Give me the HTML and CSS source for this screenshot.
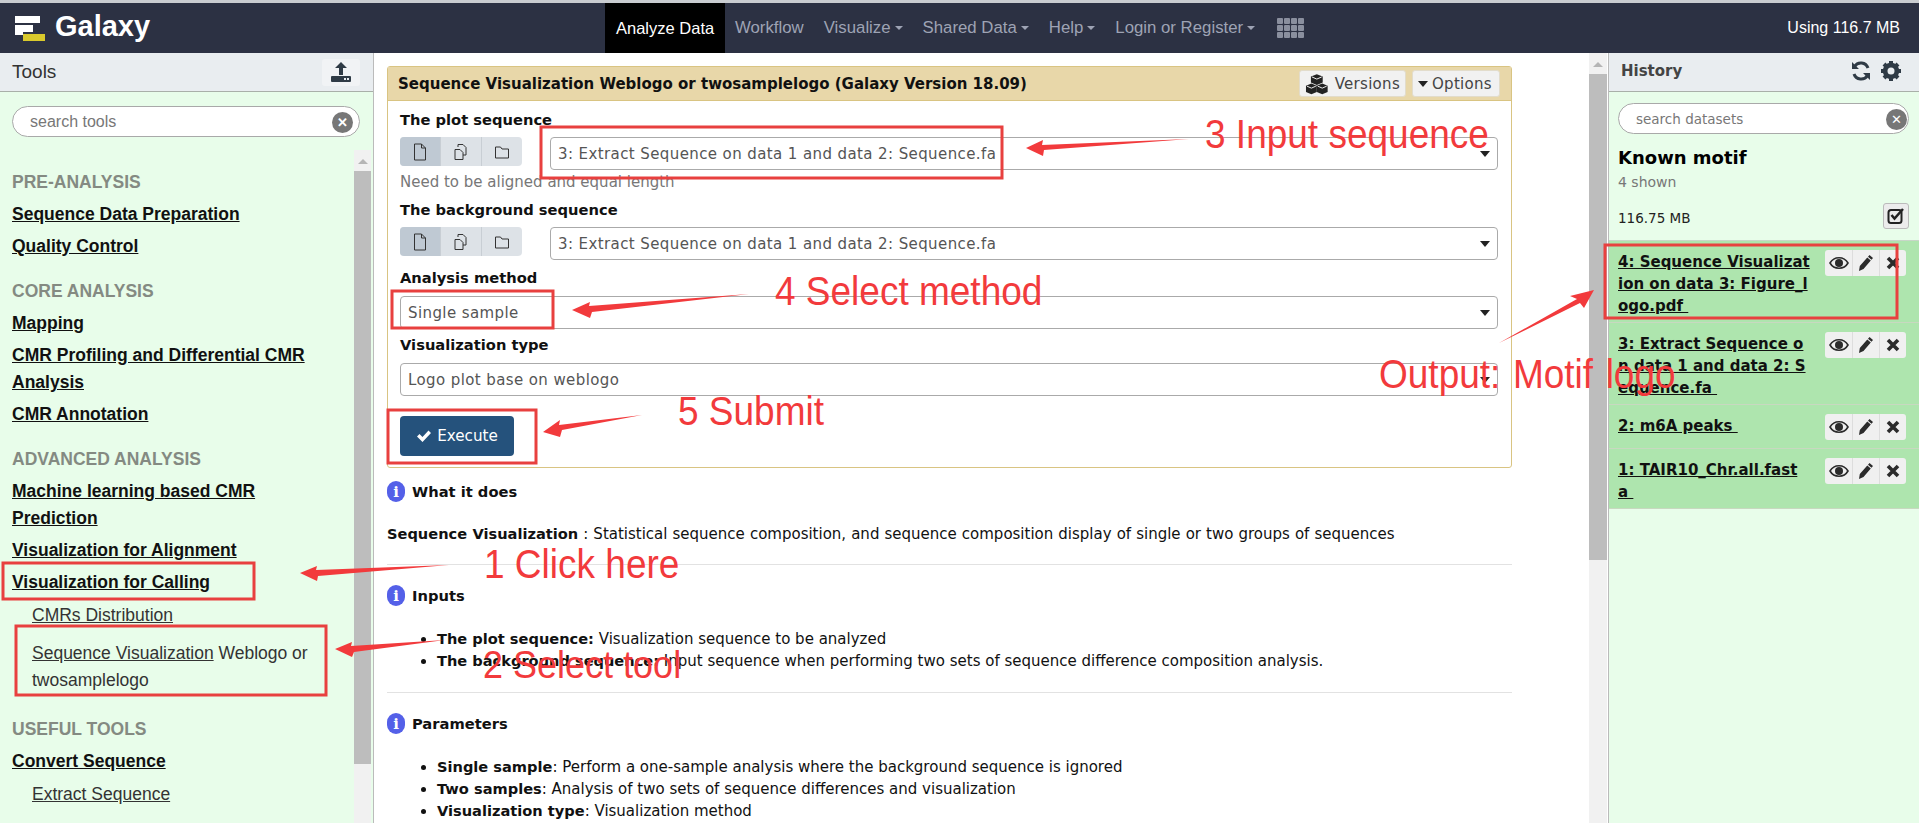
FILE: index.html
```html
<!DOCTYPE html>
<html lang="en">
<head>
<meta charset="utf-8">
<title>Galaxy</title>
<link rel="stylesheet" href="styles.css">
</head>
<body>
<div class="top-strip"></div>
<header class="navbar">
  <div class="brand">
    <svg class="logo" width="32" height="28" viewBox="0 0 32 28"><rect x="1" y="1" width="25" height="7" fill="#fff"/><rect x="1" y="10" width="18" height="7" fill="#fff"/><rect x="1" y="17" width="8" height="3" fill="#fff"/><rect x="9" y="19" width="22" height="7" fill="#d9c92c"/></svg>
    <span class="brand-name">Galaxy</span>
  </div>
  <nav class="nav">
    <a class="nav-item active">Analyze Data</a>
    <a class="nav-item">Workflow</a>
    <a class="nav-item caret">Visualize</a>
    <a class="nav-item caret">Shared Data</a>
    <a class="nav-item caret">Help</a>
    <a class="nav-item caret">Login or Register</a>
    <span class="grid-icon"><i></i><i></i><i></i><i></i><i></i><i></i><i></i><i></i><i></i><i></i><i></i><i></i></span>
  </nav>
  <div class="quota">Using 116.7 MB</div>
</header>
<div class="workspace">
  <aside class="left">
    <div class="panel-head">
      <span class="panel-title">Tools</span>
      <span class="upload"><svg width="22" height="22" viewBox="0 0 22 22"><path d="M11 1l6 6h-4v7H9V7H5z" fill="#2f3b46"/><rect x="1" y="15" width="20" height="6" rx="1" fill="#2f3b46"/><rect x="14" y="17" width="2" height="2" fill="#e9edf0"/><rect x="17" y="17" width="2" height="2" fill="#e9edf0"/></svg></span>
    </div>
    <div class="tool-search"><div class="search-box tools-box"><span>search tools</span><b class="clear">✕</b></div></div>
    <div class="tool-body">
      <div class="tool-list">
        <div class="label">PRE-ANALYSIS</div>
        <a class="tool">Sequence Data Preparation</a>
        <a class="tool">Quality Control</a>
        <div class="label">CORE ANALYSIS</div>
        <a class="tool">Mapping</a>
        <a class="tool">CMR Profiling and Differential CMR Analysis</a>
        <a class="tool">CMR Annotation</a>
        <div class="label">ADVANCED ANALYSIS</div>
        <a class="tool">Machine learning based CMR Prediction</a>
        <a class="tool">Visualization for Alignment</a>
        <a class="tool">Visualization for Calling</a>
        <div class="sub"><u>CMRs Distribution</u></div>
        <div class="sub sub-wide"><u>Sequence Visualization</u> Weblogo or twosamplelogo</div>
        <div class="label">USEFUL TOOLS</div>
        <a class="tool">Convert Sequence</a>
        <div class="sub"><u>Extract Sequence</u></div>
      </div>
      <div class="scroll scroll-left"><span class="arrow"></span><span class="thumb thumb-left"></span></div>
    </div>
  </aside>
  <main class="center">
    <div class="center-content">
      <section class="card">
        <div class="card-head">
          <span class="card-title">Sequence Visualization Weblogo or twosamplelogo (Galaxy Version 18.09)</span>
          <span class="btn btn-versions"><svg width="24" height="22" viewBox="0 0 24 22"><path d="M12 1l6 2.500v6L12 12 6 9.500v-6z" fill="#222"/><path d="M6.500 10.500l5.500 2.200v6.300L6.500 21.500 1 19v-6.300z" fill="#222"/><path d="M17.500 10.500l5.500 2.200V19l-5.500 2.500L12 19v-6.300z" fill="#222"/><path d="M7 3.800l5 2.200 5-2.200M2 13.200l4.500 2 4.500-2M13 13.200l4.500 2 4.500-2" stroke="#eee" fill="none"/></svg>Versions</span>
          <span class="btn btn-options"><i class="tri"></i>Options</span>
        </div>
        <div class="card-body">
          <div class="field-label">The plot sequence</div>
          <div class="picker">
            <div class="btn-group">
              <span class="seg on"><svg width="14" height="18" viewBox="0 0 14 18"><path d="M1.500 1h7l4 4v12h-11zM8.500 1v4h4" fill="none" stroke="#333"/></svg></span>
              <span class="seg"><svg width="16" height="18" viewBox="0 0 16 18"><path d="M5 4V1.500h5l3 3V12h-3M2 6.500h5l3 3V16.500H2z" fill="none" stroke="#333"/></svg></span>
              <span class="seg"><svg width="16" height="16" viewBox="0 0 16 16"><path d="M1.500 3h5l1.500 2h6.500v9h-13z" fill="none" stroke="#333"/></svg></span>
            </div>
            <div class="select"><span>3: Extract Sequence on data 1 and data 2: Sequence.fa</span><i class="tri"></i></div>
          </div>
          <div class="help">Need to be aligned and equal length</div>
          <div class="field-label gap-b">The background sequence</div>
          <div class="picker">
            <div class="btn-group">
              <span class="seg on"><svg width="14" height="18" viewBox="0 0 14 18"><path d="M1.500 1h7l4 4v12h-11zM8.500 1v4h4" fill="none" stroke="#333"/></svg></span>
              <span class="seg"><svg width="16" height="18" viewBox="0 0 16 18"><path d="M5 4V1.500h5l3 3V12h-3M2 6.500h5l3 3V16.500H2z" fill="none" stroke="#333"/></svg></span>
              <span class="seg"><svg width="16" height="16" viewBox="0 0 16 16"><path d="M1.500 3h5l1.500 2h6.500v9h-13z" fill="none" stroke="#333"/></svg></span>
            </div>
            <div class="select"><span>3: Extract Sequence on data 1 and data 2: Sequence.fa</span><i class="tri"></i></div>
          </div>
          <div class="field-label gap-c">Analysis method</div>
          <div class="select"><span>Single sample</span><i class="tri"></i></div>
          <div class="field-label gap-d">Visualization type</div>
          <div class="select"><span>Logo plot base on weblogo</span><i class="tri"></i></div>
          <span class="execute"><svg width="16" height="14" viewBox="0 0 16 14"><path d="M1 7.500l2.500-2.500 3 3L12.500 1.500 15 4l-8.500 9z" fill="#fff"/></svg>Execute</span>
        </div>
      </section>
      <div class="doc">
        <h4 class="doc-h first"><i class="info">i</i>What it does</h4>
        <p class="doc-p"><b>Sequence Visualization</b> : Statistical sequence composition, and sequence composition display of single or two groups of sequences</p>
        <hr class="doc-hr">
        <h4 class="doc-h"><i class="info">i</i>Inputs</h4>
        <ul class="doc-list">
          <li><b>The plot sequence:</b> Visualization sequence to be analyzed</li>
          <li><b>The background sequence:</b> Input sequence when performing two sets of sequence difference composition analysis.</li>
        </ul>
        <hr class="doc-hr">
        <h4 class="doc-h"><i class="info">i</i>Parameters</h4>
        <ul class="doc-list">
          <li><b>Single sample</b>: Perform a one-sample analysis where the background sequence is ignored</li>
          <li><b>Two samples</b>: Analysis of two sets of sequence differences and visualization</li>
          <li><b>Visualization type</b>: Visualization method</li>
        </ul>
      </div>
    </div>
    <div class="scroll scroll-center"><span class="arrow"></span><span class="thumb thumb-center"></span></div>
  </main>
  <aside class="right">
    <div class="panel-head hist-head">
      <span class="hist-title">History</span>
      <span class="hist-icons">
        <svg width="22" height="22" viewBox="0 0 22 22"><path d="M18 8a7.500 7.500 0 0 0-13.500-1.500M4 14a7.500 7.500 0 0 0 13.500 1.500" fill="none" stroke="#2f3b46" stroke-width="3"/><path d="M2 2v7h7zM20 20v-7h-7z" fill="#2f3b46"/></svg>
        <svg width="22" height="22" viewBox="0 0 22 22"><circle cx="11" cy="11" r="6" fill="none" stroke="#2f3b46" stroke-width="4.500"/><path d="M11 1v20M1 11h20M4 4l14 14M18 4L4 18" stroke="#2f3b46" stroke-width="4"/><circle cx="11" cy="11" r="3.500" fill="#e9edf0"/></svg>
      </span>
    </div>
    <div class="hist-top">
      <div class="search-box hist-search"><span>search datasets</span><b class="clear">✕</b></div>
      <div class="hist-name">Known motif</div>
      <div class="hist-shown">4 shown</div>
      <div class="hist-size"><span>116.75 MB</span><span class="check"><svg width="18" height="18" viewBox="0 0 18 18"><rect x="1.500" y="3" width="13" height="13" rx="2.500" fill="none" stroke="#222" stroke-width="2"/><path d="M4.500 8l3 3.500L16 2" fill="none" stroke="#222" stroke-width="2.500"/></svg></span></div>
    </div>
    <div class="dataset"><a>4: Sequence Visualizat<br>ion on data 3: Figure_l<br>ogo.pdf </a><span class="acts"><span class="act"><svg width="20" height="14" viewBox="0 0 20 14"><path d="M1 7c4-7 14-7 18 0-4 7-14 7-18 0z" fill="none" stroke="#2b2b2b" stroke-width="1.600"/><circle cx="10" cy="7" r="4" fill="#2b2b2b"/></svg></span><span class="act"><svg width="16" height="18" viewBox="0 0 16 18"><path d="M11.500 1l3.500 3-1.500 1.800-3.500-3zM9.300 3.600l3.500 3L5.500 15 1 17l.8-5z" fill="#2b2b2b"/></svg></span><span class="act"><svg width="14" height="14" viewBox="0 0 14 14"><path d="M2 2l10 10M12 2L2 12" stroke="#2b2b2b" stroke-width="3.600"/></svg></span></span></div>
    <div class="dataset"><a>3: Extract Sequence o<br>n data 1 and data 2: S<br>equence.fa </a><span class="acts"><span class="act"><svg width="20" height="14" viewBox="0 0 20 14"><path d="M1 7c4-7 14-7 18 0-4 7-14 7-18 0z" fill="none" stroke="#2b2b2b" stroke-width="1.600"/><circle cx="10" cy="7" r="4" fill="#2b2b2b"/></svg></span><span class="act"><svg width="16" height="18" viewBox="0 0 16 18"><path d="M11.500 1l3.500 3-1.500 1.800-3.500-3zM9.300 3.600l3.500 3L5.500 15 1 17l.8-5z" fill="#2b2b2b"/></svg></span><span class="act"><svg width="14" height="14" viewBox="0 0 14 14"><path d="M2 2l10 10M12 2L2 12" stroke="#2b2b2b" stroke-width="3.600"/></svg></span></span></div>
    <div class="dataset"><a>2: m6A peaks </a><span class="acts"><span class="act"><svg width="20" height="14" viewBox="0 0 20 14"><path d="M1 7c4-7 14-7 18 0-4 7-14 7-18 0z" fill="none" stroke="#2b2b2b" stroke-width="1.600"/><circle cx="10" cy="7" r="4" fill="#2b2b2b"/></svg></span><span class="act"><svg width="16" height="18" viewBox="0 0 16 18"><path d="M11.500 1l3.500 3-1.500 1.800-3.500-3zM9.300 3.600l3.500 3L5.500 15 1 17l.8-5z" fill="#2b2b2b"/></svg></span><span class="act"><svg width="14" height="14" viewBox="0 0 14 14"><path d="M2 2l10 10M12 2L2 12" stroke="#2b2b2b" stroke-width="3.600"/></svg></span></span></div>
    <div class="dataset"><a>1: TAIR10_Chr.all.fast<br>a </a><span class="acts"><span class="act"><svg width="20" height="14" viewBox="0 0 20 14"><path d="M1 7c4-7 14-7 18 0-4 7-14 7-18 0z" fill="none" stroke="#2b2b2b" stroke-width="1.600"/><circle cx="10" cy="7" r="4" fill="#2b2b2b"/></svg></span><span class="act"><svg width="16" height="18" viewBox="0 0 16 18"><path d="M11.500 1l3.500 3-1.500 1.800-3.500-3zM9.300 3.600l3.500 3L5.500 15 1 17l.8-5z" fill="#2b2b2b"/></svg></span><span class="act"><svg width="14" height="14" viewBox="0 0 14 14"><path d="M2 2l10 10M12 2L2 12" stroke="#2b2b2b" stroke-width="3.600"/></svg></span></span></div>
  </aside>
</div>

<svg class="marks" width="1919" height="823" viewBox="0 0 1919 823">
  <g fill="none" stroke="#e8403f" stroke-width="3">
    <rect x="541" y="127" width="461" height="51"/>
    <rect x="392" y="291" width="161" height="37"/>
    <rect x="388" y="410" width="148" height="53"/>
    <rect x="1605" y="245" width="292" height="73"/>
    <rect x="3" y="563" width="251" height="36"/>
    <rect x="16" y="626" width="310" height="69"/>
  </g>
  <g fill="#f23a3c">
    <polygon points="1026,148 1043,140 1042,145 1189,139 1044,150 1043,156"/>
    <polygon points="572,310 590,302 589,306 749,294 592,312 590,318"/>
    <polygon points="543,432 560,420 559,425 642,415 562,430 560,437"/>
    <polygon points="300,573 317,566 316,570 449,565 318,576 317,581"/>
    <polygon points="335,649 352,642 351,646 445,640 354,652 352,657"/>
    <polygon points="1594,290 1584,308 1580,303 1499,343 1577,299 1570,296"/>
  </g>
</svg>
<span class="note note-3">3 Input sequence</span>
<span class="note note-4">4 Select method</span>
<span class="note note-5">5 Submit</span>
<span class="note note-1">1 Click here</span>
<span class="note note-2">2 Select tool</span>
<span class="note note-o">Output:&nbsp; Motif&nbsp; logo</span>
</body>
</html>
```
FILE: styles.css
```css
* { box-sizing: border-box; }
html, body { margin: 0; height: 823px; overflow: hidden; }
body { position: relative; font-family: "DejaVu Sans", sans-serif; font-size: 14px; color: #111; background: #fff; }
.top-strip { height: 3px; background: #c9ccd0; }
.navbar { height: 50px; background: #2c3143; display: flex; align-items: stretch; color: #fff; }
.brand { width: 605px; display: flex; align-items: center; padding-left: 14px; }
.logo { display: block; margin-top: 1px; }
.brand-name { font: bold 29px "Liberation Sans", sans-serif; margin-left: 9px; margin-top: -4px; }
.nav { display: flex; align-items: stretch; flex: 1; font: 15px "Liberation Sans", sans-serif; }
.nav-item { display: flex; align-items: center; padding: 0 10px; color: #9ea3b4; font-size: 16.800px; white-space: nowrap; }
.nav-item.active { background: #000; color: #fff; padding: 0 11px; width: 120px; font-size: 16.500px; }
.caret::after { content: ""; margin-left: 4px; border-top: 4px solid #9ea3b4; border-left: 4px solid transparent; border-right: 4px solid transparent; }
.grid-icon { display: grid; grid-template-columns: repeat(4, 6px); grid-template-rows: repeat(3, 6px); gap: 1px; align-self: center; margin-left: 12px; }
.grid-icon i { background: #8a8f9e; border-radius: 1px; }
.quota { font: 16px "Liberation Sans", sans-serif; align-self: center; padding-right: 19px; }
.workspace { display: flex; height: 770px; }
.left { width: 374px; flex: none; background: #e8fdea; border-right: 1px solid #bbb; display: flex; flex-direction: column; font-family: "Liberation Sans", sans-serif; }
.panel-head { height: 39px; flex: none; background: #e9edf0; border-bottom: 1px solid #a9b0a9; display: flex; align-items: center; justify-content: space-between; }
.panel-title { font-size: 19px; color: #333; padding-left: 12px; }
.upload { width: 38px; height: 27px; margin-right: 13px; background: #f1f3f5; border-radius: 3px; display: flex; align-items: center; justify-content: center; }
.tool-search { padding: 14px 13px 13px 12px; }
.search-box { height: 31px; background: #fff; border: 1px solid #a9a9a9; border-radius: 16px; display: flex; align-items: center; justify-content: space-between; padding: 0 1px 0 17px; color: #777; font-size: 16px; }
.tools-box { padding-right: 6px; }
.clear { width: 21px; height: 21px; border-radius: 50%; background: #777; color: #fff; font-size: 13px; display: flex; align-items: center; justify-content: center; margin-top: 2px; }
.tool-body { flex: 1; display: flex; min-height: 0; }
.tool-list { flex: 1; padding: 19px 0 0 12px; min-width: 0; }
.label { color: #848a82; font-size: 17.500px; font-weight: bold; line-height: 26px; margin-bottom: 6px; padding-top: 13px; }
.label:first-child { padding-top: 0; margin-bottom: 6px; }
.tool { display: block; color: #111; font-weight: bold; font-size: 17.500px; line-height: 27px; margin-bottom: 5px; text-decoration: underline; max-width: 320px; }
.sub { font-size: 17.500px; line-height: 27px; color: #333; margin-left: 20px; margin-top: 6px; margin-bottom: 6px; max-width: 300px; }
.sub-wide { margin-top: 11px; margin-bottom: 9px; }
.scroll { flex: none; width: 17px; background: #f1f1f1; display: flex; flex-direction: column; align-items: stretch; }
.arrow { height: 21px; flex: none; position: relative; }
.arrow::before { content: ""; position: absolute; left: 4px; top: 9px; border-bottom: 5px solid #b5b5b5; border-left: 5px solid transparent; border-right: 5px solid transparent; }
.thumb { background: #bdbdbd; display: block; }
.thumb-left { height: 593px; }
.thumb-center { height: 486px; }
.scroll-left { margin-right: 2px; }
.center { flex: 1; display: flex; min-width: 0; }
.center-content { flex: 1; padding: 13px 0 0 13px; min-width: 0; }
.scroll-center { width: 18px; margin-right: 1px; background: #f1f1f1; }
.card { width: 1125px; height: 402px; border: 1px solid #d9c482; border-radius: 3px; }
.card-head { height: 34px; background: #e8d7a9; border-bottom: 1px solid #d9c482; display: flex; align-items: center; padding: 0 11px 0 10px; font-weight: bold; gap: 6px; }
.card-title { flex: 1; font-size: 15px; }
.btn { height: 27px; background: #f1f1f1; border-radius: 3px; border: 1px solid #e2dccb; display: inline-flex; align-items: center; gap: 6px; padding: 0 5px; font-weight: normal; color: #444; font-size: 15px; letter-spacing: 0.300px; }
.btn-versions { width: 107px; }
.btn-options { width: 88px; }
.tri { display: inline-block; border-top: 6px solid #222; border-left: 5px solid transparent; border-right: 5px solid transparent; }
.btn .tri { margin-right: -2px; }
.card-body { padding: 9px 13px 0 12px; }
.field-label { font-weight: bold; font-size: 14.700px; line-height: 20px; margin-bottom: 7px; }
.gap-b { margin-bottom: 7px; }
.gap-c { margin-top: 8px; margin-bottom: 8px; }
.gap-d { margin-top: 6px; margin-bottom: 8px; }
.picker { display: flex; align-items: flex-start; gap: 28px; }
.btn-group { display: flex; width: 122px; height: 29px; flex: none; border-radius: 4px; overflow: hidden; background: #dde2e7; }
.seg { flex: 1; display: flex; align-items: center; justify-content: center; border-right: 1px solid #c8ced4; }
.seg:last-child { border-right: 0; }
.seg.on { background: #bfc9d3; }
.select { flex: 1; height: 33px; border: 1px solid #aaa; border-radius: 4px; display: flex; align-items: center; justify-content: space-between; padding: 0 7px; color: #555; background: #fff; font-size: 15px; letter-spacing: 0.400px; }
.help { color: #777; line-height: 18px; margin-top: 3px; margin-bottom: 9px; font-size: 15px; }
.execute { display: inline-flex; align-items: center; justify-content: center; gap: 5px; width: 114px; height: 40px; background: #25527c; color: #fff; border-radius: 4px; margin-top: 20px; font-size: 15.200px; }
.doc { padding-top: 13px; width: 1125px; font-size: 15px; }
.doc b { font-size: 14.600px; }
.doc-h { margin: 0; display: flex; align-items: center; gap: 7px; font-size: 14.700px; line-height: 20px; }
.info { width: 18px; height: 21px; border-radius: 9px; background: #5460e8; color: #fff; font: bold 15px "DejaVu Serif", serif; display: flex; align-items: center; justify-content: center; }
.doc-p { margin: 23px 0 0; line-height: 18px; word-spacing: 0.300px; }
.doc-hr { border: 0; border-top: 1px solid #e2e2e2; margin: 21px 0 20px; }
.doc-list { margin: 22px 0 0; padding-left: 50px; line-height: 22px; }
.doc-list + .doc-hr { margin-top: 20px; }
.doc-h + .doc-list { margin-top: 22px; }
.right { width: 311px; flex: none; background: #e8fdea; border-left: 1px solid #bbb; }
.hist-head { background: #e9edf0; padding-bottom: 2px; }
.hist-title { font-weight: bold; font-size: 15px; color: #444; padding-left: 12px; }
.hist-icons { display: flex; gap: 8px; padding-right: 17px; }
.hist-top { padding: 11px 10px 0 9px; height: 149px; border-bottom: 1px solid #c8d6c8; }
.hist-search { height: 31px; padding-left: 17px; padding-right: 1px; font-family: "DejaVu Sans", sans-serif; font-size: 13.500px; }
.hist-name { font-weight: bold; font-size: 18px; margin-top: 12px; line-height: 24px; color: #000; }
.hist-shown { color: #777; font-size: 14px; line-height: 20px; margin-top: 2px; }
.hist-size { display: flex; justify-content: space-between; align-items: center; margin-top: 11px; color: #222; font-size: 13.500px; }
.hist-size > span:first-child { padding-top: 3px; }
.check { width: 26px; height: 26px; background: #ececec; border: 1px solid #bbb; border-radius: 3px; display: flex; align-items: center; justify-content: center; }
.dataset { background: #aee5ae; border-bottom: 1px solid #c8d8c0; padding: 10px 0 5px 9px; display: flex; justify-content: space-between; align-items: flex-start; }
.dataset a { white-space: pre-wrap; font-weight: bold; line-height: 22px; text-decoration: underline; color: #111; font-size: 15px; }
.acts { display: flex; height: 26px; margin: -1px 13px 3px 0; border-radius: 3px; overflow: hidden; flex: none; }
.act { width: 27px; background: #f0f0f0; border-left: 1px solid #ddd; display: flex; align-items: center; justify-content: center; }
.act:first-child { border-left: 0; }
.marks { position: absolute; left: 0; top: 0; pointer-events: none; }
.note { position: absolute; color: #f23a3c; font: 37px/44px "Liberation Sans", sans-serif; white-space: nowrap; transform: scaleY(1.1); }
.note-3 { left: 1205px; top: 113px; }
.note-4 { left: 775px; top: 270px; }
.note-5 { left: 678px; top: 390px; }
.note-1 { left: 484px; top: 543px; }
.note-2 { left: 483px; top: 643px; font-size: 36px; }
.note-o { left: 1379px; top: 353px; word-spacing: -4px; }
```
